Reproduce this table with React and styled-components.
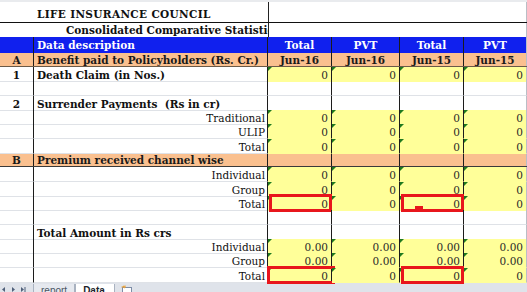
import styled, { createGlobalStyle } from "styled-components";

const GlobalStyle = createGlobalStyle`
  * { box-sizing: border-box; }
  body {
    margin: 0;
    background: #ffffff;
    font-family: "DejaVu Serif", "Liberation Serif", serif;
  }
`;

const COLS = "34px 234px 64px 68px 64px 63px";
const ROW_H = "14.333px";
const YELLOW = "#ffff99";
const ORANGE = "#fac08f";
const BLUE = "#1020ee";
const GRID = "#dfe2e7";

const rows = [
  { idx: "1", label: "Death Claim (in Nos.)", bold: true, values: ["0", "0", "0", "0"] },
  { blank: true },
  { idx: "2", label: "Surrender Payments  (Rs in cr)", bold: true },
  { label: "Traditional", values: ["0", "0", "0", "0"] },
  { label: "ULIP", values: ["0", "0", "0", "0"] },
  { label: "Total", values: ["0", "0", "0", "0"] },
  { idx: "B", label: "Premium received channel wise", section: true },
  { label: "Individual", values: ["0", "0", "0", "0"] },
  { label: "Group", values: ["0", "0", "0", "0"] },
  { label: "Total", values: ["0", "0", "0", "0"], marks: [0, 2], cursor: true },
  { blank: true },
  { label: "Total Amount in Rs crs", bold: true },
  { label: "Individual", values: ["0.00", "0.00", "0.00", "0.00"] },
  { label: "Group", values: ["0.00", "0.00", "0.00", "0.00"] },
  { label: "Total", values: ["0", "0", "0", "0"], marks: [0, 2], wide: true },
];

export default function App() {
  return (
    <Sheet>
      <GlobalStyle />
      <TopStrip />
      <TitleRow>
        <TitleText>LIFE INSURANCE COUNCIL</TitleText>
        <SideCell />
      </TitleRow>
      <SubtitleRow>
        <SubtitleText>Consolidated Comparative Statistics</SubtitleText>
        <SideCell />
      </SubtitleRow>

      <Row $h="16px" $bg={BLUE} $color="#ffffff">
        <IdxCell $line={false} />
        <DescCell $bold $line={false}>Data description</DescCell>
        {["Total", "PVT", "Total", "PVT"].map((t, i) => (
          <HeadCell key={i} $last={i === 3}>{t}</HeadCell>
        ))}
      </Row>

      <Row $h="14px" $bg={ORANGE} $color="#1a1a1a" $bottom="#6b5a48">
        <IdxCell $bold $line={false}>A</IdxCell>
        <DescCell $bold $line={false}>Benefit paid to Policyholders (Rs. Cr.)</DescCell>
        {["Jun-16", "Jun-16", "Jun-15", "Jun-15"].map((t, i) => (
          <HeadCell key={i} $last={i === 3}>{t}</HeadCell>
        ))}
      </Row>

      {rows.map((r, n) => {
        if (r.section) {
          return (
            <Row key={n} $h={ROW_H} $bg={ORANGE} $color="#1a1a1a" $top="#3a3a3a" $bottom="#3a3a3a">
              <IdxCell $bold $line={false}>{r.idx}</IdxCell>
              <DescCell $bold $line={false}>{r.label}</DescCell>
              {[0, 1, 2, 3].map((i) => (
                <HeadCell key={i} $last={i === 3} />
              ))}
            </Row>
          );
        }
        const right = !r.bold && !r.blank;
        return (
          <Row key={n} $h={ROW_H} $color="#111111" $low>
            <IdxCell $bold>{r.idx}</IdxCell>
            <DescCell $bold={r.bold} $right={right}>{r.label}</DescCell>
            {[0, 1, 2, 3].map((i) => (
              <DataCell key={i} $fill={r.values ? YELLOW : null} $last={i === 3}>
                {r.values && <Flag />}
                {r.values ? r.values[i] : ""}
                {r.marks && r.marks.includes(i) && <Mark $wide={r.wide && i === 0} />}
                {r.cursor && i === 2 && <Cursor />}
              </DataCell>
            ))}
          </Row>
        );
      })}

      <TabBar>
        <NavArrows>
          <svg width="30" height="10" viewBox="0 0 30 10">
            <path d="M5 3 L2 5.5 L5 8 Z" fill="#50607a" />
            <path d="M12 3 L15 5.5 L12 8 Z" fill="#50607a" />
            <path d="M21 3 L24 5.5 L21 8 Z" fill="#50607a" />
            <rect x="24.5" y="3" width="1" height="5" fill="#50607a" />
          </svg>
        </NavArrows>
        <Tab>report</Tab>
        <Tab $active>Data</Tab>
        <NewSheet>
          <svg width="14" height="10" viewBox="0 0 14 10">
            <rect x="2.5" y="3.5" width="9" height="8" fill="#ffffff" stroke="#7d8ca6" />
            <path d="M3 2 L5 4 M5 1.5 V3.5 M1.5 3 H4" stroke="#e8a13a" strokeWidth="1.2" />
          </svg>
        </NewSheet>
      </TabBar>
    </Sheet>
  );
}

const Sheet = styled.div`
  width: 527px;
  height: 292px;
  overflow: hidden;
  display: flex;
  flex-direction: column;
  background: #ffffff;
`;

const TopStrip = styled.div`
  height: 2px;
  background: #e9ebee;
  flex: none;
`;

const TitleRow = styled.div`
  display: grid;
  grid-template-columns: 268px 259px;
  height: 21px;
  flex: none;
  border-bottom: 1px solid #111111;
`;

const TitleText = styled.div`
  font-weight: bold;
  font-size: 10.5px;
  letter-spacing: 0.35px;
  color: #111111;
  padding: 6px 0 0 37px;
  white-space: nowrap;
`;

const SideCell = styled.div`
  border-left: 1px solid #222222;
  border-right: 1px solid #b9bec6;
`;

const SubtitleRow = styled(TitleRow)`
  height: 14px;
  border-bottom: none;
`;

const SubtitleText = styled.div`
  font-weight: bold;
  font-size: 10.5px;
  color: #111111;
  padding-left: 66px;
  white-space: nowrap;
  overflow: hidden;
  line-height: 14px;
`;

const Row = styled.div`
  display: grid;
  grid-template-columns: ${COLS};
  height: ${(p) => p.$h};
  flex: none;
  background: ${(p) => p.$bg || "transparent"};
  color: ${(p) => p.$color};
  font-size: 10.5px;
  border-top: ${(p) => (p.$top ? `1px solid ${p.$top}` : "none")};
  border-bottom: ${(p) => (p.$bottom ? `1px solid ${p.$bottom}` : "none")};

  & > div {
    padding-top: ${(p) => (p.$low ? "2px" : "0")};
  }
`;

const Cell = styled.div`
  position: relative;
  display: flex;
  align-items: center;
  white-space: pre;
  overflow: visible;
  font-weight: ${(p) => (p.$bold ? "bold" : "normal")};
  border-bottom: ${(p) => (p.$line === false ? "none" : `1px solid ${GRID}`)};
`;

const IdxCell = styled(Cell)`
  justify-content: center;
  border-right: 1px solid #1c1c1c;
`;

const DescCell = styled(Cell)`
  justify-content: ${(p) => (p.$right ? "flex-end" : "flex-start")};
  padding-left: 3px;
  padding-right: 2px;
  border-right: 1px solid #1c1c1c;
`;

const HeadCell = styled(Cell)`
  justify-content: center;
  font-weight: bold;
  border-bottom: none;
  border-right: 1px solid ${(p) => (p.$last ? "#b9bec6" : "#1c1c1c")};
`;

const DataCell = styled(Cell)`
  justify-content: flex-end;
  padding-right: 3px;
  color: #2a2a2a;
  background: ${(p) => p.$fill || "transparent"};
  border-bottom: 1px solid ${(p) => p.$fill || GRID};
  border-right: 1px solid ${(p) => (p.$last ? "#b9bec6" : "#1c1c1c")};
`;

const Flag = styled.span`
  position: absolute;
  top: 0;
  left: 0;
  width: 0;
  height: 0;
  border-top: 4px solid #1f7a1f;
  border-right: 4px solid transparent;
`;

const Mark = styled.span`
  position: absolute;
  top: -2px;
  bottom: -2px;
  left: ${(p) => (p.$wide ? "-1px" : "1px")};
  right: ${(p) => (p.$wide ? "-4px" : "-1px")};
  border: 3px solid #e8161c;
  pointer-events: none;
`;

const Cursor = styled.span`
  position: absolute;
  left: 15px;
  bottom: 1px;
  width: 8px;
  height: 3px;
  background: #e8161c;
`;

const TabBar = styled.div`
  flex: none;
  height: 18px;
  display: flex;
  align-items: flex-start;
  background: #dfe3ea;
  border-top: 1px solid #3b3b3b;
  font-family: "Liberation Sans", "DejaVu Sans", sans-serif;
  font-size: 10px;
  color: #39414d;
`;

const NavArrows = styled.div`
  width: 33px;
  padding-top: 1px;
  display: flex;
`;

const Tab = styled.div`
  height: 14px;
  padding: 1px 7px 0 7px;
  margin-top: 1px;
  background: ${(p) => (p.$active ? "#ffffff" : "#e6e9ef")};
  font-weight: ${(p) => (p.$active ? "bold" : "normal")};
  border-left: 1px solid #a9b2c0;
  border-right: 1px solid #a9b2c0;
  color: ${(p) => (p.$active ? "#1d232c" : "#4b5563")};
  padding-right: ${(p) => (p.$active ? "9px" : "7px")};
`;

const NewSheet = styled.div`
  padding: 1px 0 0 5px;
`;
